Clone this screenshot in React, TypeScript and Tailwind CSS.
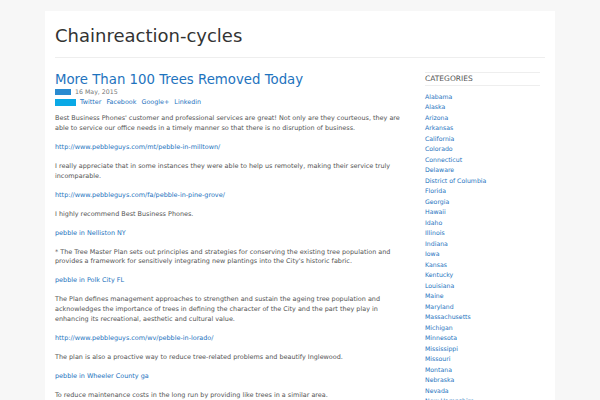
const states = [
  'Alabama', 'Alaska', 'Arizona', 'Arkansas', 'California', 'Colorado', 'Connecticut',
  'Delaware', 'District of Columbia', 'Florida', 'Georgia', 'Hawaii', 'Idaho', 'Illinois',
  'Indiana', 'Iowa', 'Kansas', 'Kentucky', 'Louisiana', 'Maine', 'Maryland', 'Massachusetts',
  'Michigan', 'Minnesota', 'Mississippi', 'Missouri', 'Montana', 'Nebraska', 'Nevada',
  'New Hampshire', 'New Jersey', 'New Mexico',
];

// body blocks of the post: text paragraphs and plain link lines
const blocks: { link?: boolean; text: string }[] = [
  { text: "Best Business Phones' customer and professional services are great! Not only are they courteous, they are able to service our office needs in a timely manner so that there is no disruption of business." },
  { link: true, text: 'http://www.pebbleguys.com/mt/pebble-in-milltown/' },
  { text: 'I really appreciate that in some instances they were able to help us remotely, making their service truly incomparable.' },
  { link: true, text: 'http://www.pebbleguys.com/fa/pebble-in-pine-grove/' },
  { text: 'I highly recommend Best Business Phones.' },
  { link: true, text: 'pebble in Nelliston NY' },
  { text: "* The Tree Master Plan sets out principles and strategies for conserving the existing tree population and provides a framework for sensitively integrating new plantings into the City's historic fabric." },
  { link: true, text: 'pebble in Polk City FL' },
  { text: 'The Plan defines management approaches to strengthen and sustain the ageing tree population and acknowledges the importance of trees in defining the character of the City and the part they play in enhancing its recreational, aesthetic and cultural value.' },
  { link: true, text: 'http://www.pebbleguys.com/wv/pebble-in-lorado/' },
  { text: 'The plan is also a proactive way to reduce tree-related problems and beautify Inglewood.' },
  { link: true, text: 'pebble in Wheeler County ga' },
  { text: 'To reduce maintenance costs in the long run by providing like trees in a similar area.' },
];

export default function App() {
  return (
    <div className="h-[400px] overflow-hidden bg-[#f7f7f7] pt-[11px] font-['DejaVu_Sans',sans-serif]">
      <div className="mx-[45px] bg-white px-[10px]">
        <header className="border-b border-[#eeeeee] pt-[14px] pb-[10px]">
          <h1 className="text-[18px] leading-[22px] text-[#333333]">Chainreaction-cycles</h1>
        </header>

        <div className="flex pt-[14px]">
          <main className="w-[348px]">
            <h2 className="text-[13.3px] leading-[16px] text-[#1e73be]">More Than 100 Trees Removed Today</h2>
            <div className="flex items-center gap-[4px] text-[6.25px] leading-[8px] text-[#777777]">
              <span className="h-[6px] w-[16px] bg-[#2a8bd0]" />
              <span>16 May, 2015</span>
            </div>
            <div className="mt-[2px] flex items-center text-[6.4px] leading-[8px] text-[#1e73be]">
              <span className="mr-[4px] h-[7px] w-[21px] bg-[#0aa9e6]" />
              <span className="flex gap-[5px]">
                <a>Twitter</a>
                <a>Facebook</a>
                <a>Google+</a>
                <a>Linkedin</a>
              </span>
            </div>

            <div className="mt-[8px] text-[6.45px] leading-[9.75px] text-[#555555]">
              {blocks.map((b, i) => (
                <p key={i} className={`mb-[9.25px] ${b.link ? 'text-[#1e73be]' : ''}`}>
                  {b.text}
                </p>
              ))}
            </div>
          </main>

          <aside className="ml-[22px] w-[115px]">
            <h3 className="border-y border-[#eeeeee] py-[2px] text-[7.5px] leading-[8px] text-[#555555]">CATEGORIES</h3>
            <ul className="mt-[5.5px] text-[6.2px] leading-[10.5px] text-[#1e73be]">
              {states.map(s => (
                <li key={s}>{s}</li>
              ))}
            </ul>
          </aside>
        </div>
      </div>
    </div>
  );
}
